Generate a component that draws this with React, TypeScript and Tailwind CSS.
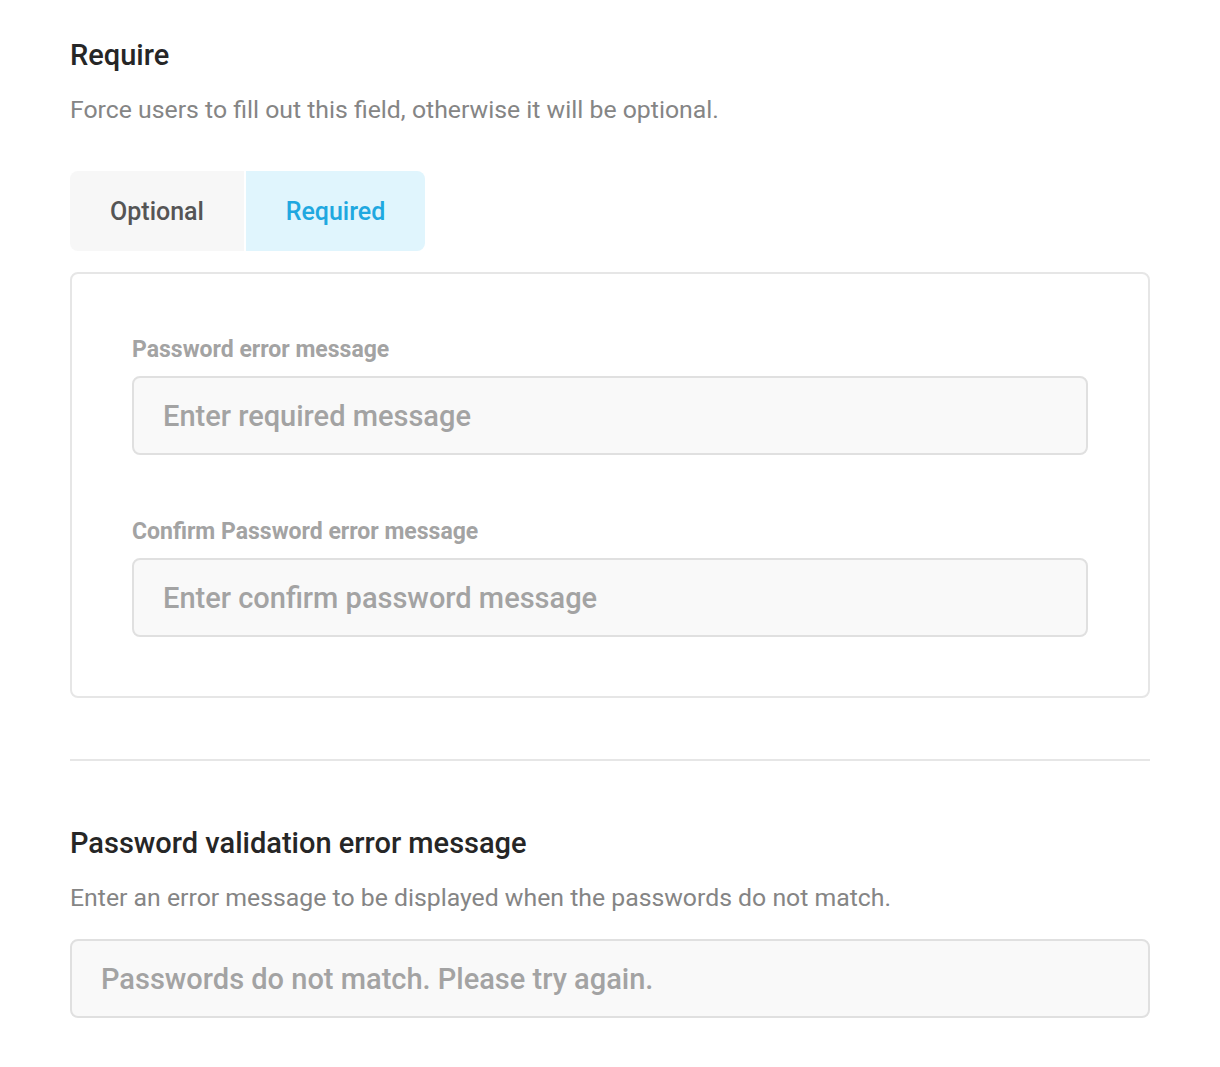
import { useState } from "react";

const font = { fontFamily: "Roboto, 'Liberation Sans', sans-serif" };

const Field = ({ label, placeholder }: { label: string; placeholder: string }) => (
  <div>
    <label className="block text-[23px] font-bold text-[#a3a3a3] leading-[30px] pt-[1px]">
      {label}
    </label>
    <input
      type="text"
      placeholder={placeholder}
      className="mt-[11px] block w-full h-[79px] px-[29px] bg-[#f9f9f9] border-2 border-[#e0e0e0] rounded-[8px] text-[29px] font-medium text-[#333] placeholder:text-[#a3a3a3] outline-none"
    />
  </div>
);

const App = () => {
  const [mode, setMode] = useState<"optional" | "required">("required");

  return (
    <div className="bg-white min-h-screen px-[70px] pt-[36px] pb-[48px]" style={font}>
      <h2 className="text-[29px] font-medium text-[#262626] leading-[38px]">Require</h2>
      <p className="mt-[19px] text-[24.8px] text-[#858585] leading-[34px]">
        Force users to fill out this field, otherwise it will be optional.
      </p>

      <div className="mt-[44px] flex gap-[2px]">
        <button
          onClick={() => setMode("optional")}
          className={`w-[174px] h-[80px] pt-[2px] rounded-l-[8px] text-[25px] font-medium ${
            mode === "optional" ? "bg-[#e0f5fd] text-[#1fa8e0]" : "bg-[#f7f7f7] text-[#555]"
          }`}
        >
          Optional
        </button>
        <button
          onClick={() => setMode("required")}
          className={`w-[179px] h-[80px] pt-[2px] rounded-r-[8px] text-[25px] font-medium ${
            mode === "required" ? "bg-[#e0f5fd] text-[#1fa8e0]" : "bg-[#f7f7f7] text-[#555]"
          }`}
        >
          Required
        </button>
      </div>

      <div className="mt-[21px] border-2 border-[#e6e6e6] rounded-[8px] px-[60px] pt-[60px] pb-[59px] flex flex-col gap-[61px]">
        <Field label="Password error message" placeholder="Enter required message" />
        <Field label="Confirm Password error message" placeholder="Enter confirm password message" />
      </div>

      <hr className="mt-[61px] border-t-2 border-[#e6e6e6]" />

      <h2 className="mt-[63px] text-[29px] font-medium text-[#262626] leading-[38px]">
        Password validation error message
      </h2>
      <p className="mt-[19px] text-[24.8px] text-[#858585] leading-[34px]">
        Enter an error message to be displayed when the passwords do not match.
      </p>
      <input
        type="text"
        placeholder="Passwords do not match. Please try again."
        className="mt-[24px] block w-full h-[79px] px-[29px] bg-[#f9f9f9] border-2 border-[#e0e0e0] rounded-[8px] text-[29px] font-medium text-[#333] placeholder:text-[#a3a3a3] outline-none"
      />
    </div>
  );
};

export default App;
